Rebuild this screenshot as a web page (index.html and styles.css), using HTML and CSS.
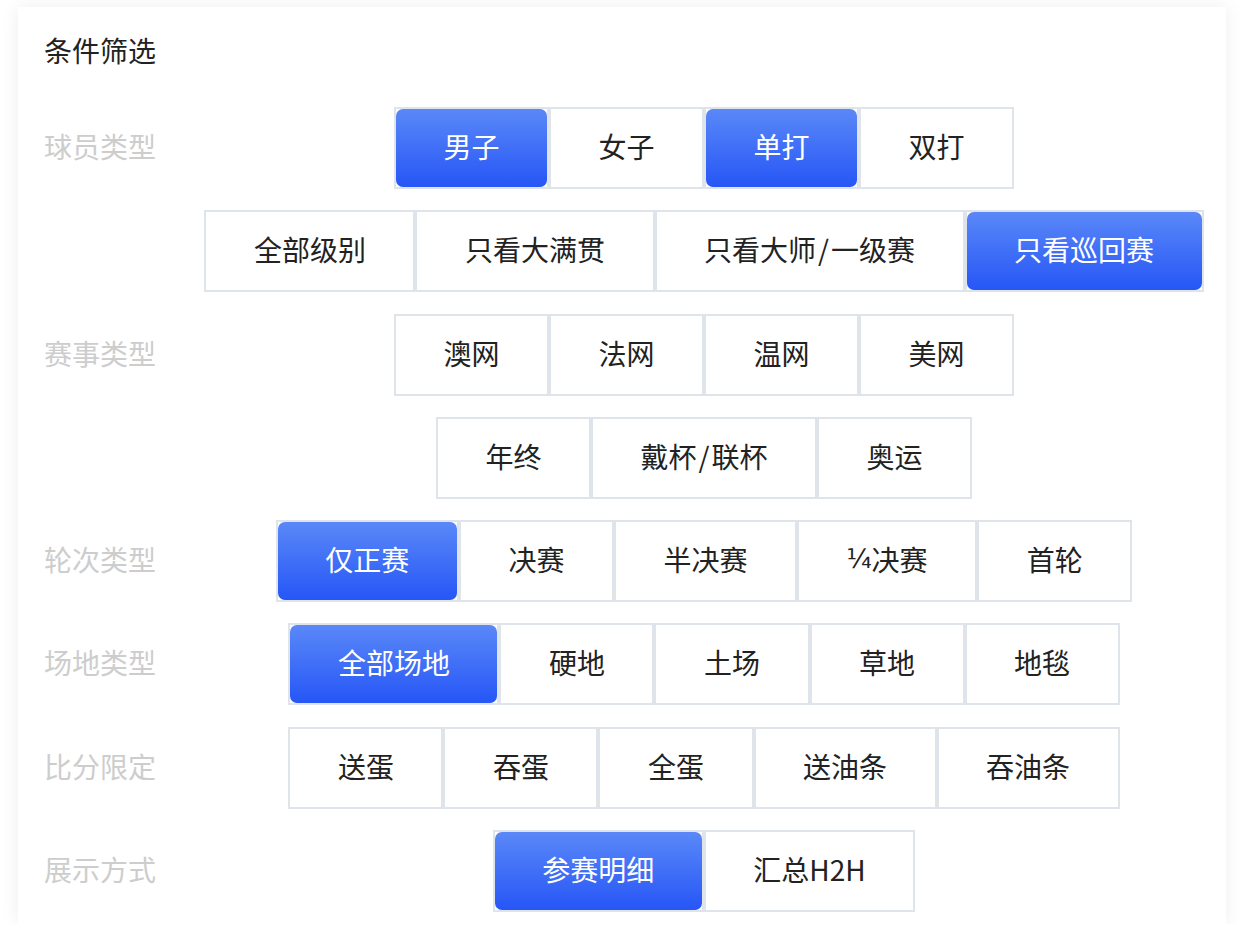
FILE: index.html
```html
<!DOCTYPE html>
<html lang="zh-CN">
  <head>
    <meta charset="UTF-8" />
    <meta name="viewport" content="width=device-width, initial-scale=1.0" />
    <title>条件筛选</title>
    <link rel="stylesheet" href="styles.css">
  </head>
  <body>
    <div class="card"><!-- filter panel -->
      <h2 class="title">条件筛选</h2>

      <div class="row">
        <div class="label">球员类型</div>
        <div class="opts">
          <div class="group">
            <div class="cell on"><span>男子</span></div>
            <div class="cell"><span>女子</span></div>
          </div>
          <div class="group">
            <div class="cell on"><span>单打</span></div>
            <div class="cell"><span>双打</span></div>
          </div>
          <div class="group">
            <div class="cell"><span>全部级别</span></div>
            <div class="cell"><span>只看大满贯</span></div>
            <div class="cell"><span>只看大师<i class="sl">/</i>一级赛</span></div>
            <div class="cell on"><span>只看巡回赛</span></div>
          </div>
        </div>
      </div>

      <div class="row">
        <div class="label">赛事类型</div>
        <div class="opts">
          <div class="group">
            <div class="cell"><span>澳网</span></div>
            <div class="cell"><span>法网</span></div>
            <div class="cell"><span>温网</span></div>
            <div class="cell"><span>美网</span></div>
          </div>
          <div class="group">
            <div class="cell"><span>年终</span></div>
            <div class="cell"><span>戴杯<i class="sl">/</i>联杯</span></div>
            <div class="cell"><span>奥运</span></div>
          </div>
        </div>
      </div>

      <div class="row">
        <div class="label">轮次类型</div>
        <div class="opts">
          <div class="group">
            <div class="cell on"><span>仅正赛</span></div>
            <div class="cell"><span>决赛</span></div>
            <div class="cell"><span>半决赛</span></div>
            <div class="cell"><span><i class="frac">¼</i>决赛</span></div>
            <div class="cell"><span>首轮</span></div>
          </div>
        </div>
      </div>

      <div class="row">
        <div class="label">场地类型</div>
        <div class="opts">
          <div class="group">
            <div class="cell on"><span>全部场地</span></div>
            <div class="cell"><span>硬地</span></div>
            <div class="cell"><span>土场</span></div>
            <div class="cell"><span>草地</span></div>
            <div class="cell"><span>地毯</span></div>
          </div>
        </div>
      </div>

      <div class="row">
        <div class="label">比分限定</div>
        <div class="opts">
          <div class="group">
            <div class="cell"><span>送蛋</span></div>
            <div class="cell"><span>吞蛋</span></div>
            <div class="cell"><span>全蛋</span></div>
            <div class="cell"><span>送油条</span></div>
            <div class="cell"><span>吞油条</span></div>
          </div>
        </div>
      </div>

      <div class="row">
        <div class="label">展示方式</div>
        <div class="opts">
          <div class="group">
            <div class="cell on"><span>参赛明细</span></div>
            <div class="cell"><span>汇总H2H</span></div>
          </div>
        </div>
      </div>
    </div>
  </body>
</html>
```

FILE: styles.css
```css
/* page */
* {
  margin: 0;
  padding: 0;
  box-sizing: border-box;
}
body {
  background: #fff;
  font-family: "Noto Sans CJK SC", "Noto Sans", "Liberation Sans", sans-serif;
  padding: 7px 24px 0 18px;
}
.card { /* white panel with soft shadow */
  width: 1208px;
  height: 917px;
  background: #fff;
  box-shadow: 0 0 18px rgba(0, 0, 0, 0.07);
  padding: 23px 20px 0 26px;
  display: flex;
  flex-direction: column;
  gap: 21.3px;
}
.title {
  font-size: 28px;
  font-weight: normal;
  color: #222;
  line-height: 40px;
  margin-bottom: 15.7px;
}
.row { /* label + options */
  display: flex;
  align-items: flex-start;
}
.label {
  width: 158px;
  height: 82px;
  flex: none;
  font-size: 28px;
  line-height: 78px;
  color: #cdcdcd;
}
.opts {
  flex: 1;
  display: flex;
  flex-wrap: wrap;
  justify-content: center;
  row-gap: 21.3px;
}
.group {
  display: flex;
}
.cell {
  height: 82px;
  min-width: 155px;
  border: 2px solid #dfe3ea;
  background: #fff;
  display: flex;
}
.cell span {
  flex: 1;
  display: flex;
  align-items: center;
  justify-content: center;
  padding: 0 47.5px 4px;
  font-size: 28px;
  color: #222;
  border-radius: 7px;
  white-space: nowrap;
}
.cell .sl {
  font-style: normal;
  margin: 0 2px;
}
.cell .frac {
  font-style: normal;
  font-family: "DejaVu Sans", sans-serif;
  font-size: 26px;
}
.cell.on span { /* selected option */
  background: linear-gradient(#5a88f8, #2656f6);
  color: #fff;
}
```
